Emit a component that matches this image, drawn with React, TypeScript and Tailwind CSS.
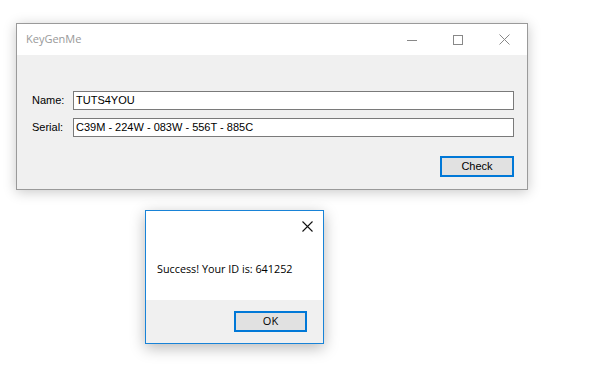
export default function App() {
  const ui = { fontFamily: '"Liberation Sans", Arial, sans-serif' };
  const seg = { fontFamily: '"Open Sans", "Noto Sans", sans-serif' };
  return (
    <div className="relative h-[377px] w-[601px] overflow-hidden bg-white" style={ui}>
      {/* main window */}
      <div className="absolute left-[16px] top-[23px] flex h-[167px] w-[512px] flex-col border border-[#9a9a9a] bg-[#f0f0f0] shadow-[0_2px_12px_rgba(0,0,0,0.22)]">
        <div className="flex h-[31px] items-center bg-white">
          <span className="ml-[9px] text-[11px] text-[#999999]" style={seg}>KeyGenMe</span>
          <div className="ml-auto flex h-full items-center">
            <div className="flex h-full w-[46px] items-center justify-center">
              <div className="mt-[1px] h-px w-[10px] bg-[#888]" />
            </div>
            <div className="flex h-full w-[46px] items-center justify-center">
              <div className="h-[10px] w-[10px] border border-[#888]" />
            </div>
            <div className="flex h-full w-[46px] items-center justify-center">
              <svg width="11" height="11" viewBox="0 0 11 11">
                <path d="M0.5 0.5L10.5 10.5M10.5 0.5L0.5 10.5" stroke="#888" strokeWidth="1" />
              </svg>
            </div>
          </div>
        </div>
        <div className="flex flex-1 flex-col pl-[15px] pr-[13px] pt-[36px] text-[11px] text-black">
          <div className="flex h-[19px] items-center">
            <span className="w-[41px]">Name:</span>
            <div className="flex h-[19px] flex-1 items-center border border-[#7a7a7a] bg-white pl-[2px] text-[11px]">TUTS4YOU</div>
          </div>
          <div className="mt-[8px] flex h-[19px] items-center">
            <span className="w-[41px]">Serial:</span>
            <div className="flex h-[19px] flex-1 items-center border border-[#7a7a7a] bg-white pl-[2px] text-[11px]">
              C39M - 224W - 083W - 556T - 885C
            </div>
          </div>
          <div className="mt-[19px] flex justify-end">
            <div className="flex h-[21px] w-[74px] items-center justify-center border-2 border-[#0078d7] bg-[#e1e1e1] text-[11px]">
              Check
            </div>
          </div>
        </div>
      </div>

      {/* message box */}
      <div className="absolute left-[145px] top-[210px] flex h-[134px] w-[179px] flex-col border border-[#1883d7] bg-white shadow-[0_4px_14px_rgba(0,0,0,0.28)]">
        <div className="flex h-[30px] items-center justify-end pr-[10px]">
          <svg width="11" height="11" viewBox="0 0 11 11">
            <path d="M0.5 0.5L10.5 10.5M10.5 0.5L0.5 10.5" stroke="#111" strokeWidth="1.1" />
          </svg>
        </div>
        <div className="flex h-[59px] items-center pl-[11px] pb-[2px] text-[10.8px] text-black" style={seg}>
          Success! Your ID is: 641252
        </div>
        <div className="flex flex-1 items-center justify-end bg-[#f0f0f0] pr-[16px]">
          <div className="flex h-[21px] w-[73px] items-center justify-center border-2 border-[#0078d7] bg-[#e1e1e1] text-[11px] text-black" style={seg}>
            OK
          </div>
        </div>
      </div>
    </div>
  );
}
